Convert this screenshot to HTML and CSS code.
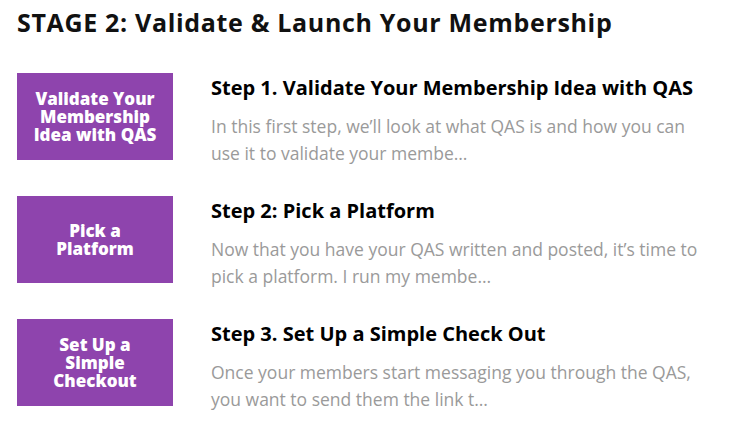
FILE: index.html
```html
<!DOCTYPE html>
<html>
<head>
<meta charset="utf-8">
<link rel="stylesheet" href="styles.css">
</head>
<body>
<div class="page">
  <h2 class="stage">STAGE 2: Validate &amp; Launch Your Membership</h2>
  <div class="steps">
    <div class="step">
      <div class="thumb"><span>Validate Your<br>Membership<br>Idea with QAS</span></div>
      <div class="info">
        <h3 class="title">Step 1. Validate Your Membership Idea with QAS</h3>
        <p class="desc">In this first step, we’ll look at what QAS is and how you can use it to validate your membe…</p>
      </div>
    </div>
    <div class="step">
      <div class="thumb"><span>Pick a<br>Platform</span></div>
      <div class="info">
        <h3 class="title">Step 2: Pick a Platform</h3>
        <p class="desc">Now that you have your QAS written and posted, it’s time to pick a platform. I run my membe…</p>
      </div>
    </div>
    <div class="step">
      <div class="thumb"><span>Set Up a<br>Simple<br>Checkout</span></div>
      <div class="info">
        <h3 class="title">Step 3. Set Up a Simple Check Out</h3>
        <p class="desc">Once your members start messaging you through the QAS, you want to send them the link t…</p>
      </div>
    </div>
  </div>
</div>
</body>
</html>
```
FILE: styles.css
```css
html, body {
  margin: 0;
  padding: 0;
  background: #ffffff;
}
.page {
  padding: 7px 0 0 17px;
  width: 720px;
}
.stage {
  margin: 0;
  font-family: "Open Sans", sans-serif;
  font-weight: 700;
  font-size: 25px;
  line-height: 30px;
  color: #111111;
  letter-spacing: 0.67px;
}
.steps {
  display: flex;
  flex-direction: column;
  gap: 29px;
  margin-top: 36px;
}
.step {
  display: flex;
  gap: 38px;
  align-items: flex-start;
}
.thumb {
  flex: 0 0 156px;
  height: 87px;
  background: #8e44ad;
  display: flex;
  align-items: center;
  justify-content: center;
  text-align: center;
}
.thumb span {
  font-family: "Open Sans", sans-serif;
  font-weight: 800;
  font-size: 17px;
  line-height: 18px;
  color: #ffffff;
}
.info {
  padding-top: 2px;
}
.title {
  margin: 0;
  font-family: "Open Sans", sans-serif;
  font-weight: 700;
  font-size: 20px;
  line-height: 26px;
  color: #000000;
}
.desc {
  margin: 12px 0 0;
  font-family: "Open Sans", sans-serif;
  font-size: 17.5px;
  line-height: 27px;
  color: #9a9a9a;
  width: 495px;
}
```
